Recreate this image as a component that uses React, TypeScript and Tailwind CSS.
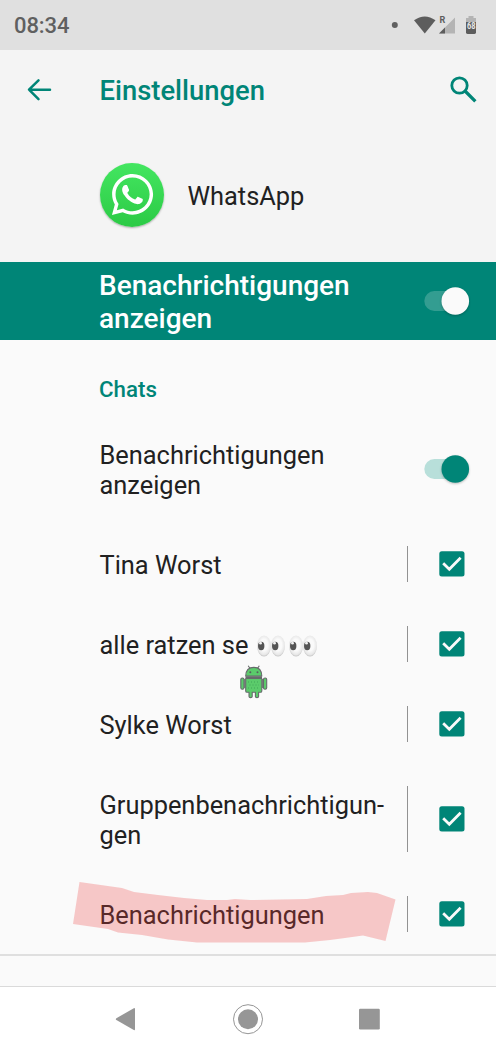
import type { ReactNode } from "react";
import { FaWhatsapp } from "react-icons/fa";

function StatusBar() {
  return (
    <header className="flex h-[50px] shrink-0 items-center justify-between bg-[#e0e0e0] pl-[14px] pr-[18px] text-[#606060]">
      <span className="pt-[2px] text-[22px] font-medium leading-[26px] tracking-[-0.1px]">08:34</span>
      <svg width="90" height="30" viewBox="388 10 90 30" aria-hidden="true">
        <circle cx="394.8" cy="25" r="3" fill="#606060" />
        <path d="M414 20.2Q424.7 12.6 435.5 20.2L424.8 33.5Z" fill="#5d5d5d" />
        <path d="M455 17.5V33.5H439Z" fill="#b4b4b4" />
        <path d="M445 27.5V33.5H439Z" fill="#5d5d5d" />
        <text x="439.5" y="22.8" fontSize="9" fontWeight="700" fill="#5d5d5d">R</text>
        <path d="M468.5 16H473.5V18H476V32.3Q476 34 474.3 34H467.7Q466 34 466 32.3V18H468.5Z" fill="#b4b4b4" />
        <path d="M466 22H476V32.3Q476 34 474.3 34H467.7Q466 34 466 32.3Z" fill="#5d5d5d" />
        <text x="471.2" y="29" fontSize="9.5" fontWeight="700" textAnchor="middle" textLength="8.5" lengthAdjust="spacingAndGlyphs" fill="#e8e8e8">68</text>
      </svg>
    </header>
  );
}

function Toggle({ inverted = false }: { inverted?: boolean }) {
  return (
    <svg width="50" height="36" viewBox="0 0 50 36" className="shrink-0 overflow-visible" aria-hidden="true">
      <rect x="4.3" y="8" width="40" height="20" rx="10" fill={inverted ? "#339d91" : "#b8dfda"} />
      <circle cx="35.3" cy="18" r="13.8" fill={inverted ? "#fafafa" : "#008577"} className="drop-shadow-[0_1.5px_1px_rgba(0,0,0,0.25)]" />
    </svg>
  );
}

function Checkbox() {
  return (
    <svg width="26" height="26" viewBox="0 0 26 26" aria-hidden="true">
      <rect x="0.3" y="0.2" width="25.2" height="25.3" rx="2.5" fill="#008577" />
      <path d="M4.2 12.3L10.3 18.2L21.6 6.8" fill="none" stroke="#fafafa" strokeWidth="2.8" />
    </svg>
  );
}

function Eyes() {
  return (
    <svg width="32" height="24" viewBox="0 0 32 24" className="inline-block align-[-4px]" aria-label="👀">
      <defs>
        <radialGradient id="eye" cx="50%" cy="45%" r="55%">
          <stop offset="50%" stopColor="#fafafa" />
          <stop offset="85%" stopColor="#e7e7e7" />
          <stop offset="100%" stopColor="#c4c4c4" />
        </radialGradient>
      </defs>
      <ellipse cx="8" cy="12" rx="6.9" ry="10.5" fill="url(#eye)" />
      <ellipse cx="22" cy="12" rx="6.9" ry="10.5" fill="url(#eye)" />
      <ellipse cx="5.2" cy="12" rx="3.2" ry="4.2" fill="#555" />
      <ellipse cx="19.2" cy="12" rx="3.2" ry="4.2" fill="#555" />
      <circle cx="4.5" cy="9.2" r="1.4" fill="#f2f2f2" />
      <circle cx="18.5" cy="9.2" r="1.4" fill="#f2f2f2" />
    </svg>
  );
}

function Robot() {
  return (
    <svg width="30" height="34" viewBox="0 0 30 34" className="absolute left-[239px] top-[60px]" aria-hidden="true">
      <g fill="#5bcb6b" stroke="#666b6b" strokeWidth="1.1" strokeLinejoin="round">
        <path d="M9.2 0.8L11.5 4.2M20.3 0.8L18 4.2" fill="none" />
        <path d="M6.7 11Q7 2.4 14.8 2.4T22.8 11Z" />
        <rect x="1.8" y="13" width="3.2" height="11.3" rx="1.5" />
        <rect x="24.5" y="13" width="3.2" height="11.3" rx="1.5" />
        <path d="M6.7 13.5H22.8V26Q22.8 27.3 21.5 27.3H19.6V31.5Q19.6 32.6 18 32.6T16.4 31.5V27.3H13.2V31.5Q13.2 32.6 11.6 32.6T10 31.5V27.3H8Q6.7 27.3 6.7 26Z" />
        <path d="M6.5 12.2H23" strokeWidth="2" />
        <path d="M5.8 14V23M23.7 14V23" />
      </g>
      <circle cx="11.3" cy="7.2" r="1" fill="#56615d" />
      <circle cx="18.5" cy="7.2" r="1" fill="#56615d" />
      <path d="M9 17H21M10.5 20H20M9 23H21" stroke="#42a558" strokeWidth="1" strokeDasharray="1 2" />
    </svg>
  );
}

function ChannelRow({ children }: { children: ReactNode }) {
  return (
    <div className="relative flex pl-[99.5px] pr-[31px]">
      <div className="flex-1 whitespace-nowrap py-[25px]">{children}</div>
      <div className="flex items-center pb-[23px] pt-[21px]">
        <span className="mr-[31px] w-[1.5px] self-stretch bg-[#929292]" />
        <Checkbox />
      </div>
    </div>
  );
}

export default function App() {
  return (
    <div className="flex h-[1053px] w-[496px] flex-col overflow-hidden bg-[#fafafa] font-['Roboto',sans-serif] text-[25.4px] leading-[30px] text-[#212121]">
      <StatusBar />
      <section className="h-[212px] shrink-0 bg-[#f4f4f4] pl-[24px] pr-[18px]">
        <div className="flex h-[80px] items-center text-[#008577]">
          <svg width="30" height="30" viewBox="24 74.5 30 30" aria-hidden="true">
            <path d="M38.5 79.8L29 89.2L38.5 98.6M29.2 89.2H50" fill="none" stroke="currentColor" strokeWidth="2.5" strokeLinecap="round" strokeLinejoin="round" />
          </svg>
          <h1 className="ml-[45.5px] flex-1 pt-[2px] text-[27.4px] font-medium leading-[34px]">Einstellungen</h1>
          <svg width="30" height="30" viewBox="448 75 30 30" aria-hidden="true">
            <circle cx="459.5" cy="85.5" r="7.7" fill="none" stroke="currentColor" strokeWidth="2.8" />
            <path d="M465.5 91.5L474.2 100.2" stroke="currentColor" strokeWidth="3.3" strokeLinecap="square" />
          </svg>
        </div>
        <div className="flex h-[129px] items-center pl-[76px]">
          <div className="flex size-[64px] items-center justify-center rounded-full bg-linear-to-b from-[#43e660] to-[#2bca45] shadow-[0_1px_2px_rgba(0,0,0,0.3)]">
            <FaWhatsapp size={47} className="text-white" />
          </div>
          <span className="ml-[23.5px] pt-[3px]">WhatsApp</span>
        </div>
      </section>
      <section className="flex h-[78px] shrink-0 items-center justify-between bg-[#008577] pl-[99px] pr-[26px] text-[28px] font-medium leading-[33.5px] text-white">
        <h2 className="pt-[2px]">Benachrichtigungen<br />anzeigen</h2>
        <Toggle inverted />
      </section>
      <main className="h-[614px] shrink-0">
        <h3 className="h-[75px] pl-[99px] pt-[36px] text-[22.3px] font-medium leading-[26px] text-[#008577]">Chats</h3>
        <div className="flex h-[110px] items-center justify-between pl-[99.5px] pr-[26px]">
          <div>Benachrichtigungen<br />anzeigen</div>
          <div className="pb-[2px]"><Toggle /></div>
        </div>
        <ChannelRow>Tina Worst</ChannelRow>
        <ChannelRow>
          <span className="mr-[1px]">alle ratzen se </span><Eyes /><Eyes />
          <Robot />
        </ChannelRow>
        <ChannelRow>Sylke Worst</ChannelRow>
        <ChannelRow>Gruppenbenachrichtigun-<br />gen</ChannelRow>
        <div className="relative">
          <ChannelRow>Benachrichtigungen</ChannelRow>
          <svg width="330" height="70" viewBox="70 875 330 70" className="absolute left-[70px] top-0" aria-hidden="true">
            <path d="M79.5 882L122 888L134 892L158 895L184 898L207 900L227 900L235 899L250 900L307 899L326 896L343 895L351 893L368 892L377 893L395.5 899.5L385.5 941L363 935.5L345 938L330 940L305 942.5L197 942.5L168 939.5L142 935L118 932.5L108 929L73 924Z" fill="#ee3f3f" fillOpacity="0.27" />
          </svg>
        </div>
      </main>
      <div className="h-[33px] shrink-0 border-b border-t-2 border-b-[#dadada] border-t-[#dfdfdf]" />
      <footer className="flex flex-1 items-start bg-white pl-[114px] pt-[15px]">
        <svg width="270" height="34" viewBox="114 1002 270 34" fill="#969696" aria-hidden="true">
          <path d="M116.4 1018.2L133.8 1008.2Q135 1007.8 135 1009V1029.3Q135 1030.5 133.8 1030L116.4 1020Q115.2 1019.2 116.4 1018.2Z" />
          <circle cx="248" cy="1019.2" r="14.5" fill="none" stroke="#969696" strokeWidth="1" />
          <circle cx="248" cy="1019.2" r="10" />
          <rect x="359" y="1008.7" width="20.8" height="20.8" rx="1.2" />
        </svg>
      </footer>
    </div>
  );
}
